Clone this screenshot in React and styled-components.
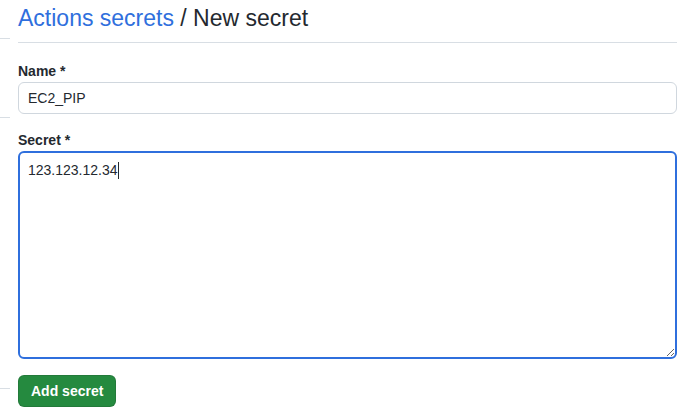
import React, { useState } from "react";
import styled, { createGlobalStyle } from "styled-components";

const GlobalStyle = createGlobalStyle`
  html, body {
    margin: 0;
    padding: 0;
    background: #ffffff;
  }
  body {
    font-family: "Liberation Sans", Helvetica, Arial, sans-serif;
    color: #24292f;
  }
`;

const Page = styled.div`
  display: grid;
  grid-template-columns: 10px 659px;
  column-gap: 8px;
  width: 691px;
  height: 418px;
  overflow: hidden;
`;

const Sidebar = styled.div`
  display: flex;
  flex-direction: column;
`;

const SideGroup = styled.div`
  height: ${(p) => p.h}px;
  border-bottom: 1px solid #d8dee4;
  box-sizing: border-box;
`;

const Main = styled.div`
  display: flex;
  flex-direction: column;
`;

const Subhead = styled.div`
  display: flex;
  align-items: flex-end;
  height: 43px;
  padding-bottom: 9px;
  box-sizing: border-box;
  border-bottom: 1px solid #d8dee4;
`;

const Heading = styled.h2`
  margin: 0;
  font-size: 23px;
  font-weight: 400;
  line-height: 30px;
  color: #24292f;
`;

const HeadLink = styled.a`
  color: #2f6fdd;
  text-decoration: none;
`;

const Form = styled.form`
  display: flex;
  flex-direction: column;
  padding-top: 18px;
`;

const Field = styled.div`
  display: flex;
  flex-direction: column;
  margin-bottom: ${(p) => p.mb || 16}px;
`;

const Label = styled.label`
  font-size: 14px;
  font-weight: 700;
  line-height: 20px;
  margin-bottom: 1px;
`;

const TextInput = styled.input`
  height: 32px;
  box-sizing: border-box;
  border: 1px solid #d0d7de;
  border-radius: 6px;
  padding: 0 9px;
  font-family: inherit;
  font-size: 14px;
  color: #24292f;
  background: #ffffff;
  outline: none;
`;

const TextArea = styled.textarea`
  display: block;
  width: 100%;
  height: 208px;
  box-sizing: border-box;
  border: 2px solid #2f6fdd;
  border-radius: 6px;
  padding: 8px 9px;
  font-family: inherit;
  font-size: 14px;
  line-height: 20px;
  color: #24292f;
  background: #ffffff;
  outline: none;
  resize: vertical;
`;

const Caret = styled.span`
  display: inline-block;
  width: 1px;
  height: 17px;
  background: #24292f;
  vertical-align: -4px;
`;

const AreaWrap = styled.div`
  position: relative;
`;

const AreaText = styled.div`
  position: absolute;
  top: 9px;
  left: 10px;
  font-size: 14px;
  line-height: 20px;
  pointer-events: none;
`;

const Button = styled.button`
  align-self: flex-start;
  height: 32px;
  padding: 0 12px;
  border: 1px solid rgba(27, 31, 36, 0.15);
  border-radius: 6px;
  background: #258a3f;
  color: #ffffff;
  font-family: inherit;
  font-size: 14px;
  font-weight: 700;
  cursor: pointer;
`;

export default function App() {
  const [name, setName] = useState("EC2_PIP");

  return (
    <>
      <GlobalStyle />
      <Page>
        <Sidebar>
          <SideGroup h={39} />
          <SideGroup h={79} />
          <SideGroup h={271} />
        </Sidebar>
        <Main>
          <Subhead>
            <Heading>
              <HeadLink href="#">Actions secrets</HeadLink> / New secret
            </Heading>
          </Subhead>
          <Form onSubmit={(e) => e.preventDefault()}>
            <Field mb={16}>
              <Label>Name *</Label>
              <TextInput
                value={name}
                onChange={(e) => setName(e.target.value)}
              />
            </Field>
            <Field mb={16}>
              <Label>Secret *</Label>
              <AreaWrap>
                <TextArea defaultValue="" />
                <AreaText>
                  123.123.12.34
                  <Caret />
                </AreaText>
              </AreaWrap>
            </Field>
            <Button type="submit">Add secret</Button>
          </Form>
        </Main>
      </Page>
    </>
  );
}
